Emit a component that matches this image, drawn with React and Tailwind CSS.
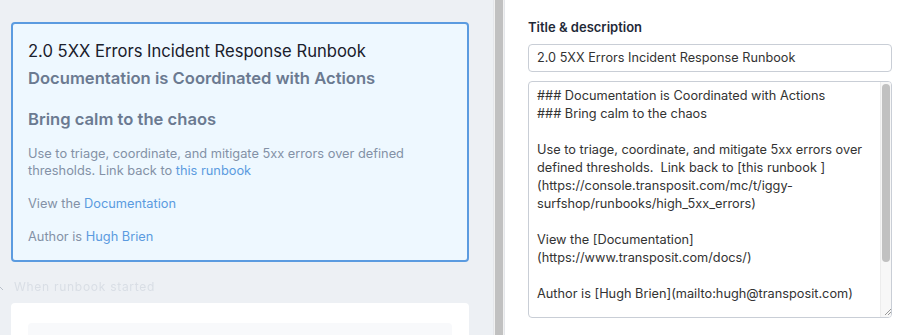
import React from 'react'

const font = { fontFamily: 'Inter, "Noto Sans", sans-serif' }

function RunbookCard() {
  return (
    <div className="w-[458px] rounded-[4px] border-2 border-[#5b9be0] bg-[#eef8ff] px-[15px] pt-[14px] pb-[15px]">
      <h1 className="text-[16.6px] leading-[26px] text-[#1a202c]">2.0 5XX Errors Incident Response Runbook</h1>
      <h3 className="text-[16.6px] leading-[28px] font-semibold text-[#6b7a91]">Documentation is Coordinated with Actions</h3>
      <h3 className="mt-[13px] text-[16.6px] leading-[28px] font-semibold text-[#6b7a91]">Bring calm to the chaos</h3>
      <p className="mt-[12px] text-[12.8px] leading-[17px] text-[#8391a6]">
        Use to triage, coordinate, and mitigate 5xx errors over defined thresholds. Link back to{' '}
        <span className="text-[#5b9be0]">this runbook</span>
      </p>
      <p className="mt-[16px] text-[12.8px] leading-[17px] text-[#8391a6]">
        View the <span className="text-[#5b9be0]">Documentation</span>
      </p>
      <p className="mt-[16px] text-[12.8px] leading-[17px] text-[#8391a6]">
        Author is <span className="text-[#5b9be0]">Hugh Brien</span>
      </p>
    </div>
  )
}

function Editor() {
  const lines = [
    '### Documentation is Coordinated with Actions',
    '### Bring calm to the chaos',
    '',
    'Use to triage, coordinate, and mitigate 5xx errors over',
    'defined thresholds.  Link back to [this runbook ]',
    '(https://console.transposit.com/mc/t/iggy-',
    'surfshop/runbooks/high_5xx_errors)',
    '',
    'View the [Documentation]',
    '(https://www.transposit.com/docs/)',
    '',
    'Author is [Hugh Brien](mailto:hugh@transposit.com)',
  ]
  return (
    <div className="mt-[9px] flex h-[237px] overflow-hidden rounded-[4px] border border-[#c9ced6]">
      <div className="flex-1 overflow-hidden pl-[8px] pt-[5px]">
        {lines.map((l, i) => (
          <div key={i} className="h-[18px] whitespace-pre text-[12.75px] leading-[18px] text-[#333]">{l}</div>
        ))}
      </div>
      <div className="flex w-[11px] flex-col bg-[#f7f7f7] border-l border-[#ececec]">
        <div className="mx-auto mt-[2px] h-[178px] w-[8px] rounded-full bg-[#c1c1c1]" />
        <div className="flex-1" />
        <svg width="11" height="11" viewBox="0 0 11 11" className="mb-[1px]">
          <path d="M10 4 L4 10 M10 7 L7 10" stroke="#999" strokeWidth="1" />
        </svg>
      </div>
    </div>
  )
}

export default function App() {
  return (
    <div className="flex h-[335px] w-[900px] overflow-hidden" style={font}>
      {/* Left preview */}
      <div className="flex w-[493px] flex-col bg-[#edf0f4] pl-[11px] pt-[22px]">
        <RunbookCard />
        <div className="relative mt-[19px] flex h-[12px] items-center">
          <svg width="4" height="6" viewBox="0 0 4 6" className="absolute -left-[11px] top-[5px]">
            <path d="M0 1 L3 4" stroke="#b9c0ca" strokeWidth="1" />
          </svg>
          <span className="pl-[3px] text-[12px] tracking-[0.06em] text-[#d9dee5] blur-[0.6px]">When runbook started</span>
        </div>
        <div className="mt-[10px] w-[458px] flex-1 rounded-t-[4px] bg-white px-[17px] pt-[20px]">
          <div className="h-full rounded-t-[4px] bg-[#f8f9fb]" />
        </div>
      </div>
      {/* Divider */}
      <div className="flex w-[12px] justify-center border-x border-[#e4e6ea] bg-[#f1f1f1]">
        <div className="w-[8px] bg-[#c1c1c1]" />
      </div>
      {/* Right editor */}
      <div className="flex-1 bg-white pl-[23px] pr-[8px] pt-[18px]">
        <label className="block text-[13px] leading-[18px] font-semibold text-[#1f2937]">Title &amp; description</label>
        <div className="mt-[8px] flex h-[28px] items-center rounded-[4px] border border-[#c9ced6] px-[8px] text-[12.7px] text-[#333]">
          2.0 5XX Errors Incident Response Runbook
        </div>
        <Editor />
      </div>
    </div>
  )
}
